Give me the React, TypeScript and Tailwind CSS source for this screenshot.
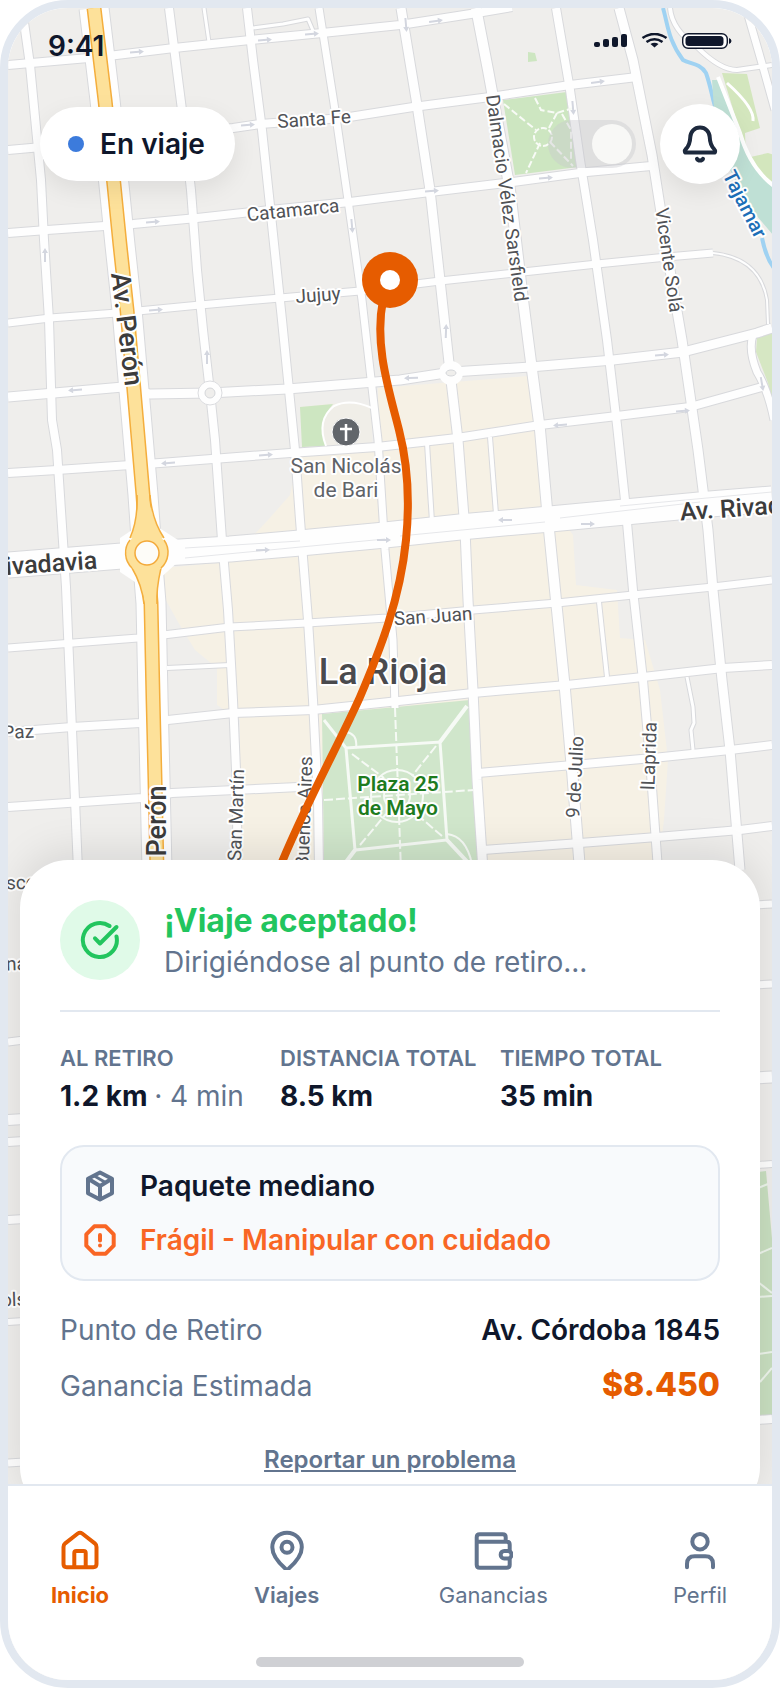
import type { ReactNode } from "react";

type Point = [number, number];

type StreetLabel = {
  text: string;
  x: number;
  y: number;
  rotate: number;
  size?: number;
  weight?: number;
  color?: string;
  anchor?: "start" | "middle" | "end";
};

const streets: { d: string; width: number }[] = [
  // north - south
  { d: "M22 8 L30 65 L41 180 L44 240 L49 320 L52 420 L57 450 L66 587 L72 730 L78 870", width: 8 },
  { d: "M169 8 L182 110 L191 190 L197 270 L203 330 L210 392 L215 440 L222 540 L228 610 L233 700 L236 770 L238 870", width: 8 },
  { d: "M247 8 L253 60 L262 130 L271 215 L282 320 L290 400 L295 450 L300 520 L308 620 L313 700 L318 800 L319 870", width: 8 },
  { d: "M319 8 L335 110 L348 200 L362 300 L370 370 L378 440 L385 550 L393 640 L395 708", width: 7 },
  { d: "M401 8 L417 105 L430 190 L440 280 L450 372 L458 440 L465 530 L468 600 L473 690 L477 780 L483 870", width: 9 },
  { d: "M476 8 L488 70 L510 190 L523 300 L532 370 L540 430 L548 520 L557 610 L565 690 L572 770 L580 870", width: 10 },
  { d: "M556 8 L570 90 L580 160 L593 240 L607 340 L617 425 L625 500 L633 590 L643 680 L650 760 L658 870", width: 8 },
  { d: "M619 8 L633 60 L652 155 L670 270 L682 340 L698 450 L708 530 L713 590 L722 680 L730 750 L740 870", width: 9 },
  { d: "M746 8 L763 67 L775 110", width: 7 },
  // east - west
  { d: "M8 65 L100 57 L174 48 L250 40 L322 33 L400 25 L477 13 L512 7", width: 8 },
  { d: "M8 150 L110 141 L233 128 L260 124 L343 118 L413 107 L490 97 L570 85 L637 77", width: 8 },
  { d: "M8 233 L47 230 L133 224 L197 218 L270 210 L350 202 L430 192 L513 182 L587 172 L651 166", width: 8 },
  { d: "M8 323 L50 318 L117 313 L200 305 L280 298 L360 291 L440 281 L523 272 L597 264 L667 257 L713 253", width: 7 },
  { d: "M8 397 L123 387 L150 394 L210 393 L287 389 L400 380 L452 372 L530 367 L613 360 L683 352 L757 333 L772 328", width: 9 },
  { d: "M8 473 L57 470 L160 463 L290 453 L377 447 L457 438 L540 425 L617 416 L690 407 L762 387", width: 8 },
  { d: "M8 648 L138 638 L230 627 L307 623 L387 618 L473 610 L557 603 L633 595 L713 587 L772 580", width: 7 },
  { d: "M8 732 L72 727 L140 723 L233 713 L313 710 L380 703 L473 693 L567 685 L643 677 L723 668 L772 665", width: 8 },
  { d: "M8 807 L142 798 L172 793 L320 786", width: 8 },
  { d: "M478 773 L573 765 L653 758 L730 750 L772 745", width: 8 },
  { d: "M483 850 L580 843 L657 837 L740 830 L772 826", width: 8 },
  // alleys and the road along the canal
  { d: "M167 668 L230 665", width: 4 },
  { d: "M427 443 L432 522", width: 4 },
  { d: "M490 437 L496 514", width: 4 },
  { d: "M599 602 L607 677", width: 4 },
  { d: "M687 677 L693 707 L694 723 L691 730 L693 750", width: 3 },
  { d: "M204 8 L209 42", width: 3 },
  { d: "M253 28 L283 24 L308 19 L314 33", width: 3 },
  { d: "M713 253 Q760 258 767 300 L768 324", width: 2 },
  { d: "M753 335 Q748 350 757 372 Q768 390 774 420", width: 7 },
  { d: "M670 8 Q672 30 697 47 Q720 70 737 70 L772 65", width: 4 },
  // strips that stay visible beside the sheet
  { d: "M8 1042 L24 1040", width: 7 },
  { d: "M8 1120 L24 1119", width: 10 },
  { d: "M8 1142 L24 1141", width: 8 },
  { d: "M8 1220 L24 1219", width: 8 },
  { d: "M8 1322 L24 1321", width: 6 },
  { d: "M8 1463 L24 1462", width: 7 },
  { d: "M755 905 L772 904", width: 7 },
  { d: "M755 985 L772 984", width: 7 },
  { d: "M755 1078 L772 1077", width: 11 },
  { d: "M758 1165 L772 1164", width: 6 },
  { d: "M758 1420 L772 1419", width: 8 },
];

const peron = "M94 8 L105 100 L114 185 L120 245 L127 310 L137 425 L143 495 L147 553 L151 603 L153 697 L155 780 L157 870";
const rivadavia = "M8 565 L147 554 L230 549 L300 543 L385 535 L460 527 L550 519 L625 512 L710 504 L772 499";

const labels: StreetLabel[] = [
  { text: "Santa Fe", x: 314, y: 119, rotate: -4 },
  { text: "Catamarca", x: 293, y: 210, rotate: -6 },
  { text: "Jujuy", x: 318, y: 295, rotate: -4 },
  { text: "Av. Perón", x: 127, y: 329, rotate: 83, size: 27, weight: 500, color: "#3c3c3c" },
  { text: "Dalmacio Vélez Sarsfield", x: 507, y: 198, rotate: 82 },
  { text: "Vicente Solá", x: 669, y: 260, rotate: 82 },
  { text: "Tajamar", x: 745, y: 204, rotate: 63, size: 20, weight: 500, color: "#1d6fb8" },
  { text: "San Nicolás", x: 346, y: 466, rotate: 0, size: 21, color: "#5f6368" },
  { text: "de Bari", x: 346, y: 490, rotate: 0, size: 21, color: "#5f6368" },
  { text: "Av. Rivad", x: 680, y: 512, rotate: -4, size: 25, weight: 500, color: "#3c3c3c", anchor: "start" },
  { text: "ivadavia", x: 97, y: 560, rotate: -4, size: 25, weight: 500, color: "#3c3c3c", anchor: "end" },
  { text: "San Juan", x: 433, y: 616, rotate: -4 },
  { text: "La Rioja", x: 383, y: 672, rotate: 0, size: 36, weight: 500, color: "#4a4a4d" },
  { text: "Paz", x: 34, y: 731, rotate: -3, anchor: "end" },
  { text: "Perón", x: 157, y: 821, rotate: -90, size: 27, weight: 500, color: "#3c3c3c" },
  { text: "San Martín", x: 236, y: 815, rotate: -88 },
  { text: "Buenos Aires", x: 304, y: 812, rotate: -88 },
  { text: "Plaza 25", x: 398, y: 784, rotate: 0, size: 21, weight: 600, color: "#1e7b1e" },
  { text: "de Mayo", x: 398, y: 808, rotate: 0, size: 21, weight: 600, color: "#1e7b1e" },
  { text: "9 de Julio", x: 575, y: 777, rotate: -87 },
  { text: "lLaprida", x: 649, y: 756, rotate: -88 },
  { text: "sco", x: 6, y: 883, rotate: -2, anchor: "start" },
  { text: "na", x: 6, y: 964, rotate: -2, anchor: "start" },
  { text: "ols", x: 1, y: 1300, rotate: -2, anchor: "start" },
];

// position and heading of the one-way arrows
const arrows: [number, number, number][] = [
  [137, 52, -5],
  [265, 40, -5],
  [312, 34, -5],
  [248, 125, -5],
  [153, 222, -4],
  [45, 255, -90],
  [352, 226, 85],
  [207, 357, -90],
  [75, 390, 176],
  [156, 310, -4],
  [168, 463, 176],
  [266, 455, -4],
  [263, 550, -3],
  [384, 540, 0],
  [505, 520, 180],
  [588, 524, 0],
  [406, 25, 85],
  [436, 21, -8],
  [432, 191, -5],
  [573, 108, 85],
  [598, 82, -8],
  [546, 178, -5],
  [446, 331, -88],
  [411, 378, 178],
  [662, 355, -5],
  [683, 411, -5],
  [560, 425, 176],
  [762, 384, 80],
];

const downtown: Point[] = [
  [378, 388], [528, 376], [538, 430], [548, 500], [573, 535], [576, 585], [617, 590], [620, 638],
  [645, 640], [660, 690], [668, 760], [664, 820], [658, 870], [240, 870], [240, 720], [217, 705],
  [217, 668], [195, 650], [178, 622], [163, 595], [163, 568], [228, 562], [268, 520], [290, 495], [300, 448], [378, 444],
];

function CityMap() {
  return (
    <svg
      className="absolute inset-0 h-full w-full"
      viewBox="8 8 764 1672"
      preserveAspectRatio="xMidYMin slice"
      role="img"
      aria-label="Mapa de La Rioja"
    >
      <rect x="0" y="0" width="780" height="1688" fill="#efeeec" />
      <polygon points={downtown.map((p) => p.join(",")).join(" ")} fill="#f6f1e5" />

      {/* parks */}
      <path d="M503 100 L567 92 L578 167 L515 175 Z" fill="#cde6c1" />
      <path d="M528 52 L535 53 L537 61 L528 62 Z" fill="#cde6c1" />
      <path d="M300 407 L333 403 L372 405 L372 444 L302 447 Z" fill="#f0eee8" />
      <path d="M300 407 L333 404 Q316 424 326 446 L302 447 Z" fill="#cde6c1" />
      <path d="M722 73 L747 74 L760 128 L745 133 L746 158 L768 153 L775 155 L775 187 L750 165 Z" fill="#d3e6bd" />
      <path d="M772 333 L757 338 L756 352 L768 383 L774 414 Z" fill="#d6e7c3" />
      <path d="M322 714 L470 700 L480 870 L324 870 Z" fill="#d0e6cb" />
      <path d="M758 1172 L766 1171 L773 1250 L773 1415 L758 1416 Z" fill="#c9dfc0" />

      {/* canal */}
      <path d="M663 8 C668 25 668 40 683 60 C690 64 700 63 706 73 C712 90 712 100 718 115" fill="none" stroke="#9fd2f2" strokeWidth="4" />
      <path d="M712 80 L720 80 L738 130 L752 165 L774 188 L774 236 L750 208 L725 160 L714 110 Z" fill="#bfe0d5" />
      <path d="M762 238 Q766 258 774 268" fill="none" stroke="#9fd2f2" strokeWidth="4" />
      <path d="M718 77 L740 133 Q750 168 774 186" fill="none" stroke="#ffffff" strokeWidth="4" />
      <path d="M727 83 Q755 108 753 121" fill="none" stroke="#ffffff" strokeWidth="3" />

      {/* block edges below, road surface above */}
      <g fill="none" stroke="#d8d9dc" strokeLinejoin="round">
        {streets.map((s) => (
          <path key={s.d} d={s.d} strokeWidth={s.width + 2} />
        ))}
        <path d={peron} strokeWidth="31" />
        <path d={rivadavia} strokeWidth="27" />
      </g>
      <g fill="none" stroke="#fefefe" strokeLinejoin="round">
        {streets.map((s) => (
          <path key={s.d} d={s.d} strokeWidth={s.width} />
        ))}
        <path d={peron} strokeWidth="29" />
        <path d={rivadavia} strokeWidth="25" />
      </g>
      <path d="M120 538 L147 520 L178 540 L178 562 L147 590 L120 572 Z" fill="#fefefe" />
      <path d="M185 548 L300 541 M185 558 L385 539 M400 536 L545 522 M560 518 L700 502 M620 506 L772 492" fill="none" stroke="#e6e7ea" strokeWidth="1" />
      <path d={peron} fill="none" stroke="#f4ae3d" strokeWidth="15" />
      <path d={peron} fill="none" stroke="#fde19a" strokeWidth="12" />
      <path d="M138 495 L148 495 Q152 520 164 538 L130 538 Q138 520 138 495 Z" fill="#fde19a" />
      <path d="M137 495 Q138 520 130 538 M150 495 Q152 520 164 538" fill="none" stroke="#f4ae3d" strokeWidth="1.5" />
      <path d="M132 568 L161 568 Q156 590 157 604 L145 604 Q142 585 132 568 Z" fill="#fde19a" />
      <path d="M132 568 Q142 585 144 604 M161 568 Q156 590 157 604" fill="none" stroke="#f4ae3d" strokeWidth="1.5" />
      <circle cx="147" cy="553" r="21" fill="#fde19a" />
      <path d="M130 540 A21 21 0 0 0 132 568 M164 540 A21 21 0 0 1 161 568" fill="none" stroke="#f4ae3d" strokeWidth="1.5" />
      <circle cx="147" cy="553" r="12" fill="#fdfcf8" stroke="#f3a93a" strokeWidth="1.5" />

      {/* small roundabouts */}
      <circle cx="210" cy="393" r="12" fill="#fefefe" stroke="#dcdde0" />
      <circle cx="210" cy="393" r="5" fill="#efeeec" stroke="#d5d7da" />
      <circle cx="451" cy="373" r="12" fill="#fefefe" />
      <ellipse cx="451" cy="373" rx="5" ry="3" fill="#efeeec" stroke="#d5d7da" />

      {/* park footpaths */}
      <g fill="none" stroke="#f8fbf6" strokeWidth="2">
        <circle cx="543" cy="137" r="9" strokeDasharray="6 2" />
        <path d="M504 104 L536 130 M540 143 L526 173 M535 98 L541 110 L557 113 L573 108 M557 113 L549 128 M550 142 L573 166 M562 114 L571 130 L571 160" strokeDasharray="7 3" />
      </g>
      <g fill="none" stroke="#f6faf5" strokeWidth="3">
        <path d="M324 720 L346 748 L440 742 L447 840 L355 850 L346 748" />
        <path d="M467 706 L440 742 M447 840 L475 870 M355 850 L340 870" strokeWidth="4" />
        <path d="M395 708 L401 870 M324 800 L474 790" strokeDasharray="9 3" strokeWidth="2" />
        <path d="M352 754 L384 778 M436 746 L412 776 M360 845 L386 814 M442 836 L414 812" strokeDasharray="9 3" strokeWidth="2" />
        <circle cx="397" cy="796" r="26" strokeWidth="2" />
        <circle cx="397" cy="796" r="13" strokeWidth="2" />
        <path d="M346 732 Q358 734 356 748 M447 834 Q466 836 472 864" strokeWidth="2" />
      </g>
      <path d="M758 1188 L768 1184 M758 1254 L772 1248 M758 1282 L772 1293 M758 1297 L772 1296 M758 1354 L772 1352 M760 1382 L772 1368" stroke="#eef5ec" strokeWidth="2" />

      {arrows.map(([x, y, heading]) => (
        <path
          key={`${x}-${y}`}
          d="M-7 -1 H2 V-3 L7 0 L2 3 V1 H-7 Z"
          transform={`translate(${x} ${y}) rotate(${heading})`}
          fill="#d3d6df"
        />
      ))}

      {/* church pin */}
      <path d="M372 408 Q350 398 334 406 Q316 420 326 446" fill="none" stroke="#ffffff" strokeWidth="2" />
      <circle cx="346" cy="432" r="14" fill="#62666b" stroke="#ffffff" strokeWidth="1" />
      <path d="M346 424 V441 M340 429 H352" stroke="#ffffff" strokeWidth="2.5" />

      {labels.map((l) => (
        <text
          key={`${l.text}-${l.x}`}
          transform={`translate(${l.x} ${l.y}) rotate(${l.rotate})`}
          textAnchor={l.anchor ?? "middle"}
          dominantBaseline="central"
          fontFamily="Roboto, sans-serif"
          fontSize={l.size ?? 19}
          fontWeight={l.weight ?? 400}
          fill={l.color ?? "#505256"}
          stroke="#ffffff"
          strokeWidth="4"
          strokeLinejoin="round"
          paintOrder="stroke"
        >
          {l.text}
        </text>
      ))}

      {/* active route */}
      <path
        d="M383 300 C374 345 389 390 399 430 C408 465 410 500 406 540 C400 600 380 650 360 697 C340 742 300 815 278 872"
        fill="none"
        stroke="#e65c00"
        strokeWidth="8"
      />
      <circle cx="390" cy="280" r="28" fill="#e65c00" />
      <circle cx="390" cy="280" r="10" fill="#ffffff" />
    </svg>
  );
}

function Icon({ size = 40, stroke = 4, children }: { size?: number; stroke?: number; children: ReactNode }) {
  return (
    <svg
      width={size}
      height={size}
      viewBox={`0 0 ${size} ${size}`}
      fill="none"
      stroke="currentColor"
      strokeWidth={stroke}
      strokeLinecap="round"
      strokeLinejoin="round"
      className="shrink-0"
      aria-hidden="true"
    >
      {children}
    </svg>
  );
}

function StatusBar() {
  return (
    <div className="flex items-start justify-between px-10 pt-[17px] text-slate-900">
      <span className="text-[28px] leading-[42px] font-semibold">9:41</span>
      <svg width="138" height="16" viewBox="0 0 138 16" className="mt-2" fill="currentColor" aria-hidden="true">
        <rect x="0" y="9" width="6" height="5" rx="2" />
        <rect x="9" y="6" width="6" height="8" rx="2" />
        <rect x="18" y="4" width="6" height="10" rx="2" />
        <rect x="27" y="1" width="6" height="13" rx="2" />
        <g fill="none" stroke="currentColor" strokeWidth="2.6">
          <path d="M48.5 5 Q60.500 -3 72.500 5" />
          <path d="M52.500 9 Q60.500 3.500 68.500 9" />
        </g>
        <path d="M56.500 11 Q60.500 8.500 64.500 11 L60.500 14.500 Z" />
        <rect x="88.700" y="0.700" width="44.600" height="14.600" rx="5.500" fill="#ffffff" stroke="currentColor" strokeWidth="1.400" />
        <rect x="91.500" y="3" width="38" height="10" rx="3.500" />
        <path d="M135 5 Q137.500 6 137.500 8 Q137.500 10 135 11 Z" />
      </svg>
    </div>
  );
}

function TopControls() {
  return (
    <div className="mt-[37px] flex items-center justify-between px-8">
      <div className="flex items-center gap-4 rounded-full bg-white py-4 pr-[30px] pl-7 shadow-[0_8px_24px_rgba(0,0,0,0.08)]">
        <span className="size-4 rounded-full bg-[#3c7bdc]" />
        <span className="text-[28px] leading-[42px] font-semibold text-slate-900">En viaje</span>
      </div>
      <div className="flex items-center gap-6">
        <button
          type="button"
          role="switch"
          aria-checked="true"
          aria-label="Disponible"
          className="flex h-12 w-[88px] justify-end rounded-full bg-[#c8c8cd]/40 p-1"
        >
          <span className="size-10 rounded-full bg-[#f8f8f6]" />
        </button>
        <button
          type="button"
          aria-label="Notificaciones"
          className="flex size-20 items-center justify-center rounded-full bg-white text-slate-800 shadow-[0_8px_24px_rgba(0,0,0,0.08)]"
        >
          <Icon>
            <path d="M20 3.500C14.300 3.500 10.500 7.800 10.300 13C10.100 18.500 9.300 21.500 5.900 25C4.200 26.800 4.800 28.600 6 28.600H34C35.200 28.600 35.800 26.800 34.100 25C30.700 21.500 29.900 18.500 29.700 13C29.500 7.800 25.700 3.500 20 3.500Z" />
            <path d="M17 34.800C18 37 22 37 23 34.800" />
          </Icon>
        </button>
      </div>
    </div>
  );
}

function Stat({ label, value, extra }: { label: string; value: string; extra?: string }) {
  return (
    <div className="whitespace-nowrap">
      <dt className="text-[22px] leading-[33px] font-semibold text-slate-500">{label}</dt>
      <dd className="text-[28px] leading-[42px] font-bold text-slate-900">
        {value} {extra && <span className="font-normal text-slate-500">· {extra}</span>}
      </dd>
    </div>
  );
}

function TripSheet() {
  return (
    <section className="mx-3 rounded-[48px] bg-white px-10 pt-10 pb-[37px] shadow-[0_-8px_40px_rgba(0,0,0,0.10)]">
      <header className="flex items-start gap-6 border-b-2 border-slate-200 pb-7">
        <div className="flex size-20 shrink-0 items-center justify-center rounded-full bg-[#e0fae8] text-[#22c55e]">
          <Icon>
            <path d="M29.500 6A17 17 0 1 0 36.500 16.500" />
            <path d="M15 18.300L20 23.500L36.500 7" />
          </Icon>
        </div>
        <div>
          <h1 className="text-[32px] leading-[42px] font-bold text-[#22c55e]">¡Viaje aceptado!</h1>
          <p className="text-[28px] leading-10 text-slate-500">Dirigiéndose al punto de retiro...</p>
        </div>
      </header>

      <dl className="mt-[30px] grid grid-cols-3">
        <Stat label="AL RETIRO" value="1.2 km" extra="4 min" />
        <Stat label="DISTANCIA TOTAL" value="8.5 km" />
        <Stat label="TIEMPO TOTAL" value="35 min" />
      </dl>

      <ul className="mt-7 space-y-3 rounded-3xl border-2 border-slate-200 bg-slate-50 px-[22px] py-[18px] text-[28px] leading-[42px] font-semibold">
        <li className="flex items-center gap-6 text-slate-900">
          <span className="text-slate-500">
            <Icon size={32}>
              <path d="M16 2.500L28 8.800V23.200L16 29.500L4 23.200V8.800Z" />
              <path d="M4.500 9L16 16L27.500 9M16 16V29" />
              <path d="M10 5.800L21.500 12.500" strokeWidth="3" />
            </Icon>
          </span>
          Paquete mediano
        </li>
        <li className="flex items-center gap-6 text-[#f96624]">
          <Icon size={32}>
            <path d="M10.300 2.300H21.700L29.700 10.300V21.700L21.700 29.700H10.300L2.300 21.700V10.300Z" />
            <path d="M16 11V16.500M16 21.500V21.600" />
          </Icon>
          Frágil - Manipular con cuidado
        </li>
      </ul>

      <dl className="mt-7 space-y-[10px] text-[28px] leading-[42px]">
        <div className="flex items-baseline justify-between">
          <dt className="text-slate-500">Punto de Retiro</dt>
          <dd className="font-semibold text-slate-900">Av. Córdoba 1845</dd>
        </div>
        <div className="flex items-baseline justify-between">
          <dt className="text-slate-500">Ganancia Estimada</dt>
          <dd className="text-[32px] leading-[48px] font-extrabold text-[#e65c00]">$8.450</dd>
        </div>
      </dl>

      <div className="mt-[33px] text-center">
        <a href="#reportar" className="text-2xl leading-9 font-semibold text-slate-500 underline">
          Reportar un problema
        </a>
      </div>
    </section>
  );
}

function TabBar() {
  return (
    <div className="relative -mt-[31px] border-t-2 border-slate-200 bg-white pt-11 pb-[13px]">
      <nav className="flex justify-between px-3 text-[22px] leading-[34px] text-slate-500">
        <a href="#inicio" aria-current="page" className="flex w-[120px] flex-col items-center gap-2 font-bold text-[#e65c00]">
          <Icon>
            <path d="M17.800 3.500Q20 1.900 22.200 3.500L34.800 13.300Q36.500 14.700 36.500 17V34Q36.500 37.200 33.300 37.200H6.700Q3.500 37.200 3.500 34V17Q3.500 14.700 5.200 13.300Z" />
            <path d="M14.300 37V23Q14.300 21 16.300 21H23.700Q25.700 21 25.700 23V37" />
          </Icon>
          Inicio
        </a>
        <a href="#viajes" className="flex w-[120px] flex-col items-center gap-2 font-semibold">
          <Icon>
            <path d="M20 2.700C11.700 2.700 5.300 9.100 5.300 17.300C5.300 25.500 12.500 33.500 18.200 38.500Q20 40 21.800 38.500C27.500 33.500 34.800 25.500 34.800 17.300C34.800 9.100 28.300 2.700 20 2.700Z" />
            <circle cx="20" cy="17.300" r="5.500" />
          </Icon>
          Viajes
        </a>
        <a href="#ganancias" className="flex w-[120px] flex-col items-center gap-2">
          <Icon>
            <path d="M3.700 11.700V34.700Q3.700 37.700 6.700 37.700H33.700Q36.700 37.700 36.700 34.700V14.700Q36.700 11.700 33.700 11.700H3.700V7.300Q3.700 4.300 6.700 4.300H29.700Q32.700 4.300 32.700 7.300V11.700" />
            <rect x="27.700" y="21" width="10.800" height="7.400" rx="3.500" fill="#ffffff" />
          </Icon>
          Ganancias
        </a>
        <a href="#perfil" className="flex w-[120px] flex-col items-center gap-2">
          <Icon>
            <circle cx="20" cy="11.700" r="7.700" />
            <path d="M7 37.300V34Q7 26.300 14.700 26.300H25.300Q33 26.300 33 34V37.300" />
          </Icon>
          Perfil
        </a>
      </nav>
      <div className="mx-auto mt-[45px] h-[10px] w-[268px] rounded-full bg-[#cfd0d4]" />
    </div>
  );
}

export default function App() {
  return (
    <div className="bg-white font-[Inter,sans-serif]">
      <main className="relative isolate flex min-h-screen flex-col overflow-hidden rounded-[68px] border-8 border-slate-200">
        <CityMap />
        <div className="relative flex flex-1 flex-col">
          <StatusBar />
          <TopControls />
          <div className="min-h-40 flex-1" />
          <TripSheet />
          <TabBar />
        </div>
      </main>
    </div>
  );
}
